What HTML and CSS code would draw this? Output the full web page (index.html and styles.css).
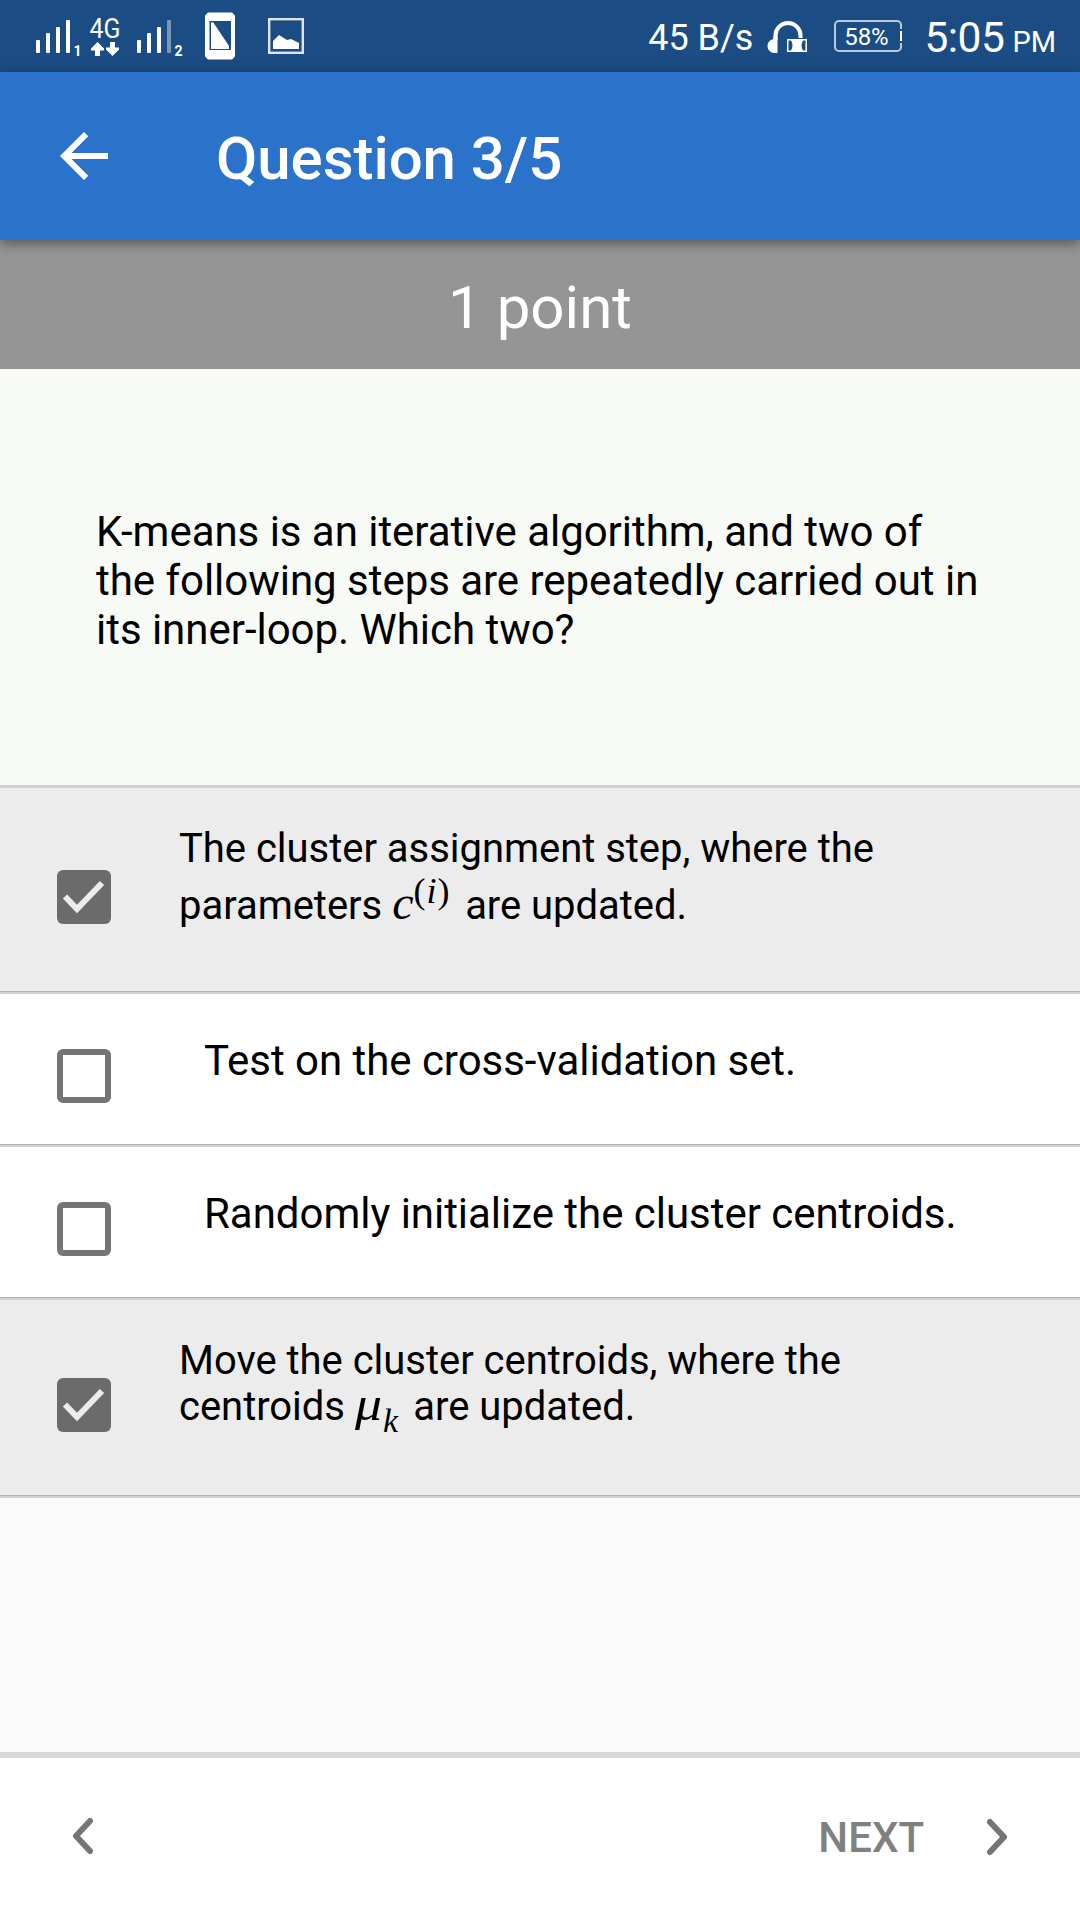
FILE: index.html
```html
<!DOCTYPE html>
<html lang="en">
<head>
<meta charset="utf-8">
<title>Question 3/5</title>
<link rel="stylesheet" href="styles.css">
</head>
<body>
<div class="screen">
  <div class="status">
    <svg class="status-icons" width="320" height="72" viewBox="0 0 320 72">
      <g fill="#fff">
        <rect x="36" y="40" width="4" height="13" rx="1"/><rect x="46" y="33" width="4" height="20" rx="1"/><rect x="56" y="27" width="4" height="26" rx="1"/><rect x="66" y="20" width="4" height="33" rx="1"/>
        <text class="sim" x="73.500" y="56">1</text>
        <text class="net" x="89.500" y="37.500" textLength="31" lengthAdjust="spacingAndGlyphs">4G</text>
        <path d="M97.500 42l6.500 6.500v2h-4v5.500h-5v-5.500h-4v-2zM112.500 56l6.500-6.500v-2h-4v-5.500h-5v5.500h-4v2z"/>
        <rect x="137" y="40" width="4" height="13" rx="1"/><rect x="147" y="33" width="4" height="20" rx="1"/><rect x="157" y="27" width="4" height="26" rx="1"/><rect x="167" y="20" width="4" height="33" rx="1" opacity=".42"/>
        <text class="sim" x="174.500" y="56">2</text>
        <path fill-rule="evenodd" d="M208 12.500h24l3 3v41l-3 3h-24l-3-3v-41zM209.500 21v29h21.500v-29z"/>
        <path d="M211 23l2-1 16 24v3h-18z"/>
        <path d="M273 49v-8l6-6 8 5 4-1 8 4v6z"/>
      </g>
      <rect x="269.200" y="19.200" width="33.600" height="33.600" fill="none" stroke="#fff" stroke-opacity=".85" stroke-width="2.400"/>
    </svg>
    <div class="status-right">
      <span class="speed">45 B/s</span>
      <svg width="42" height="36" viewBox="0 0 42 36">
        <path d="M8.500 20v-4.500a12.500 12.500 0 0 1 25 0V20" fill="none" stroke="#fff" stroke-width="4"/>
        <path d="M10.500 16v17h-3a7 7 0 0 1-7-7c0-3 2-6 6-7v-3z" fill="#fff"/>
        <path d="M19.500 18.500h21v14h-21z" fill="#fff" stroke="#1b4d84" stroke-width="1"/>
        <path d="M21.500 20.500h2.500c2 3 2 7 0 10h-2.500zM38.500 20.500H36c-2 3-2 7 0 10h2.500z" fill="#1b4d84"/>
      </svg>
      <div class="battery"><span>58%</span></div>
      <span class="clock">5:05</span>
      <span class="meridiem">PM</span>
    </div>
  </div>

  <header class="appbar">
    <svg width="72" height="72" viewBox="0 0 24 24"><path fill="#fff" d="M20 11H7.830l5.590-5.590L12 4l-8 8 8 8 1.410-1.410L7.830 13H20v-2z"/></svg>
    <h1 class="title">Question 3/5</h1>
  </header>

  <div class="points">1 point</div>

  <p class="question">K-means is an iterative algorithm, and two of<br>the following steps are repeatedly carried out in<br>its inner-loop. Which two?</p>

  <ul class="options">
    <li class="option option-cluster checked">
      <span class="box"><svg width="54" height="54" viewBox="0 0 54 54"><path d="M8 26.500l12 12.500L45 13" fill="none" stroke="#ececec" stroke-width="6"/></svg></span>
      <span class="label">The cluster assignment step, where the<br>parameters <span class="math math-c">c<sup>(<i>i</i>)</sup></span>are updated.</span>
    </li>
    <li class="option plain">
      <span class="box"></span>
      <span class="label">Test on the cross-validation set.</span>
    </li>
    <li class="option plain">
      <span class="box"></span>
      <span class="label">Randomly initialize the cluster centroids.</span>
    </li>
    <li class="option option-move checked">
      <span class="box"><svg width="54" height="54" viewBox="0 0 54 54"><path d="M8 26.500l12 12.500L45 13" fill="none" stroke="#ececec" stroke-width="6"/></svg></span>
      <span class="label">Move the cluster centroids, where the<br>centroids <span class="math math-mu"><span class="mu">μ</span><sub>k</sub></span>are updated.</span>
    </li>
  </ul>

  <footer class="pager">
    <svg width="22" height="38" viewBox="0 0 22 38"><path d="M18 4L4 19l14 15" fill="none" stroke="#757575" stroke-width="6" stroke-linecap="round" stroke-linejoin="round"/></svg>
    <div class="next">
      <span>NEXT</span>
      <svg width="22" height="38" viewBox="0 0 22 38"><path d="M4 4l14 15L4 34" fill="none" stroke="#757575" stroke-width="6" stroke-linecap="round" stroke-linejoin="round"/></svg>
    </div>
  </footer>
</div>
</body>
</html>
```
FILE: styles.css
```css
* { box-sizing: border-box; }
body { margin: 0; font-family: Roboto, "Liberation Sans", sans-serif; color: #000; }
svg { display: block; flex: none; }

.screen { width: 1080px; height: 1920px; display: flex; flex-direction: column; background: #fafafa; overflow: hidden; }

.status { height: 72px; flex: none; display: flex; justify-content: space-between; background: #1b4d84; color: #fff; white-space: nowrap; }
.sim { font: bold 14px Roboto, sans-serif; }
.net { font: 400 27px Roboto, sans-serif; }
.status-right { display: flex; padding-right: 24px; line-height: 72px; }
.status-right svg { margin: 19.500px 0 0 14px; }
.speed { font-size: 36px; padding-top: 2px; }
.battery { position: relative; width: 68px; height: 32px; margin: 20px 0 0 25px; border: 2px solid #b9c9db; border-radius: 5px; padding-right: 4px; font-size: 24px; line-height: 30px; text-align: center; }
/* terminal of the battery: a bright mark between two gaps in the outline */
.battery::after { content: ""; position: absolute; right: -2px; top: 7px; width: 2px; height: 14px; background: linear-gradient(#1b4d84 2px, #fff 2px, #fff 12px, #1b4d84 12px); }
.clock { margin-left: 22px; font-size: 42.500px; padding-top: 2px; letter-spacing: -.5px; }
.meridiem { margin-left: 8px; font-size: 29px; padding-top: 6px; }

.appbar { height: 168px; flex: none; display: flex; align-items: center; padding-left: 48px; background: #2a72ca; color: #fff; position: relative; box-shadow: 0 3px 12px rgba(0, 0, 0, .45); }
.title { margin: 6px 0 0 96px; font-size: 60px; font-weight: 500; line-height: 70px; letter-spacing: -.06px; }

.points { height: 129px; flex: none; padding-top: 3px; background: #959595; color: #fff; font-size: 60px; line-height: 129px; text-align: center; }

.question { height: 416px; flex: none; margin: 0; padding: 138px 0 0 96px; background: #f8faf6; font-size: 42px; line-height: 49px; letter-spacing: -.03px; white-space: nowrap; }

.options { list-style: none; margin: 0; padding: 0; flex: 1; border-top: 3px solid #d0d2d0; }
.option { display: flex; align-items: flex-start; padding-left: 57px; background: #fff; box-shadow: inset 0 -2px #d2d2d2, inset 0 -3px #b2b2b2; font-size: 42px; line-height: 50px; letter-spacing: -.03px; white-space: nowrap; }
.checked { background: #ececec; font-size: 40px; }
.box { flex: none; width: 54px; height: 54px; border: 6px solid #757575; border-radius: 6px; }
.checked .box { border: 0; background: #6b6b6b; }

.plain { height: 153px; padding-top: 55px; }
.plain .label { margin: -13px 0 0 93px; }
.option-cluster { height: 206px; padding-top: 82px; }
.option-cluster .label { margin: -50px 0 0 68px; line-height: 57px; }
.option-move { height: 198px; padding-top: 78px; }
.option-move .label { margin: -40px 0 0 68px; line-height: 46px; }

.math { display: inline-block; font-family: "Liberation Serif", serif; font-style: italic; font-size: 48px; line-height: 0; }
.math sup, .math sub { font-size: 34px; line-height: 0; }
.math-c { width: 73px; }
.math-c sup { vertical-align: 16px; font-style: normal; font-size: 36px; letter-spacing: 1px; }
.math-mu { width: 58.500px; }
.mu { display: inline-block; transform: scaleX(1.12); transform-origin: left; margin-right: 4px; }
.math-mu sub { vertical-align: -12px; }

.pager { height: 168px; flex: none; display: flex; justify-content: space-between; align-items: flex-start; padding: 59px 72px 0; border-top: 6px solid #d7d9d6; background: #fff; }
.next { display: flex; align-items: flex-start; gap: 62px; color: #808080; font-size: 42px; font-weight: 500; line-height: 38px; }
.next span { padding-top: 2px; }
.next svg { margin-top: 1px; }
```
